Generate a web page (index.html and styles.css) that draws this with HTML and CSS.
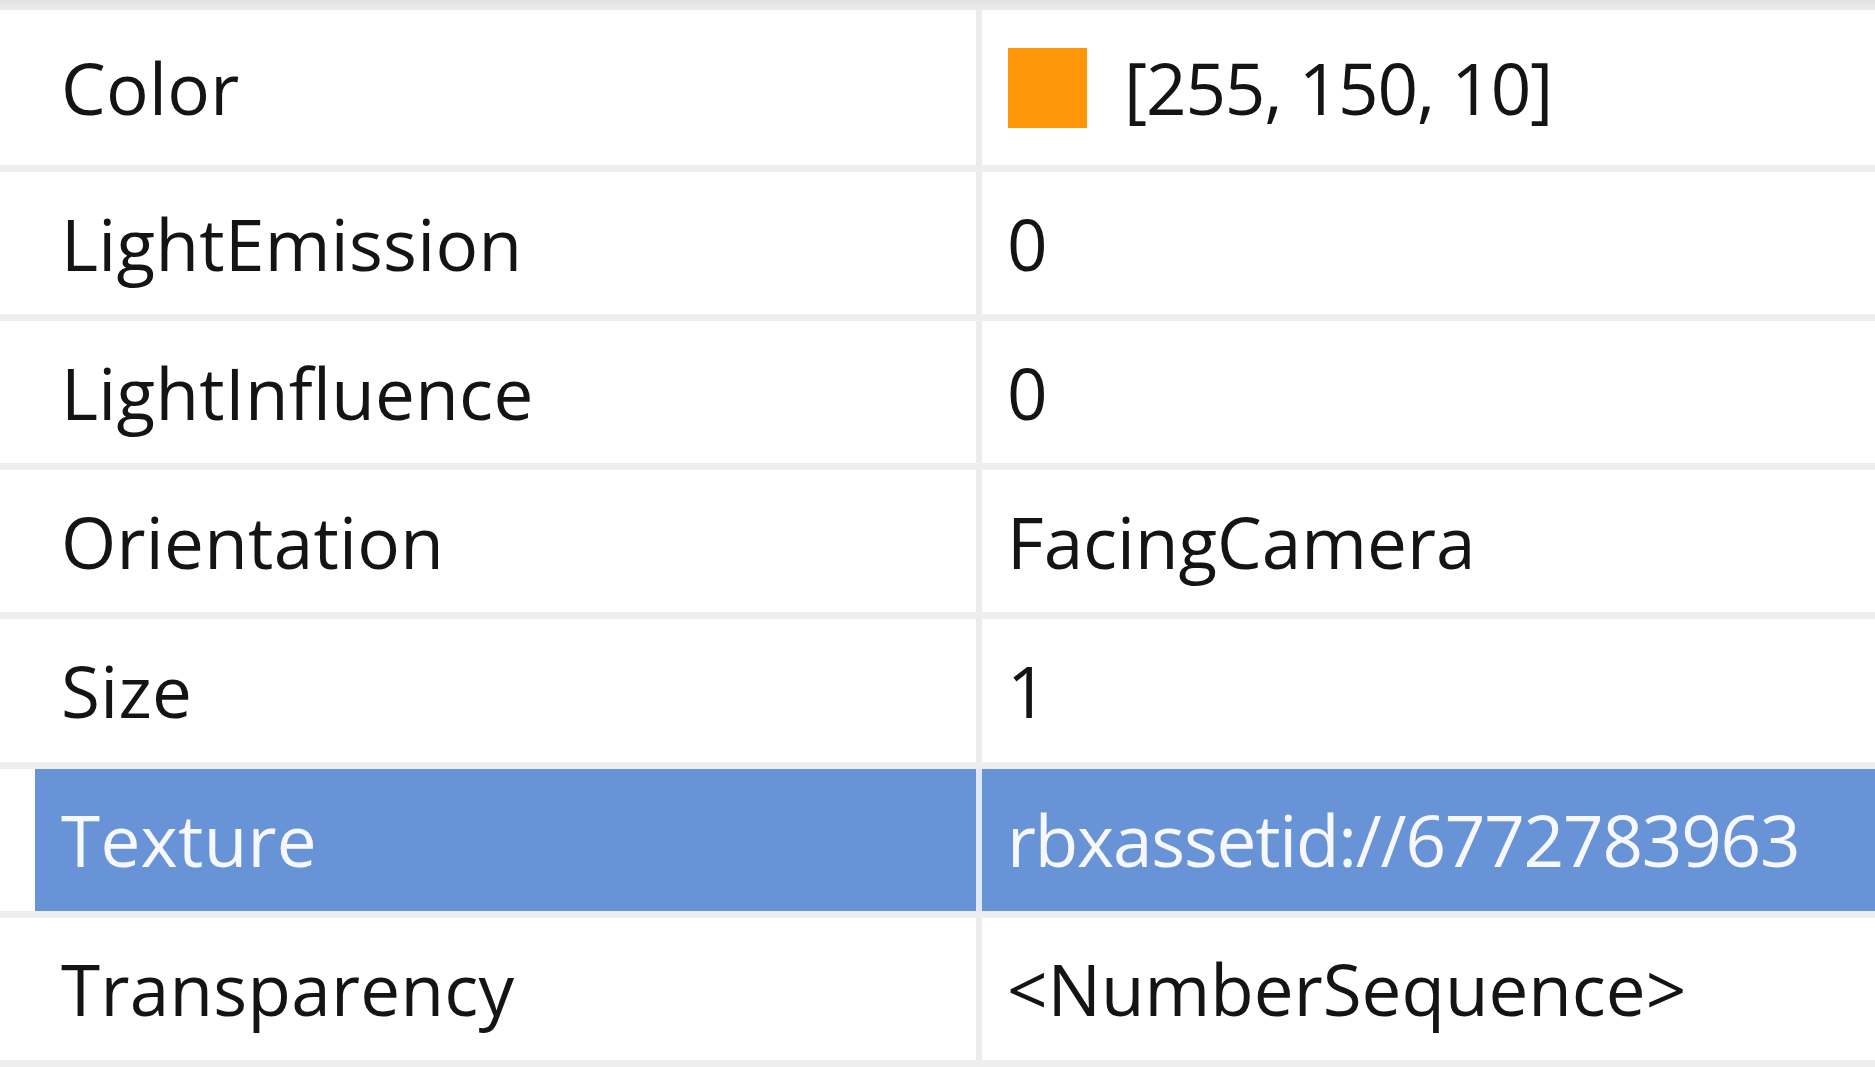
FILE: index.html
```html
<!DOCTYPE html>
<html lang="en">
<head>
<meta charset="utf-8">
<title>Properties</title>
<link rel="stylesheet" href="styles.css">
</head>
<body>
<div class="panel">
  <div class="topstrip"></div>
  <div class="row first">
    <div class="name">Color</div>
    <div class="divider"></div>
    <div class="value"><span class="swatch"></span><span class="tight">[255, 150, 10]</span></div>
  </div>
  <div class="row">
    <div class="name">LightEmission</div>
    <div class="divider"></div>
    <div class="value">0</div>
  </div>
  <div class="row">
    <div class="name">LightInfluence</div>
    <div class="divider"></div>
    <div class="value">0</div>
  </div>
  <div class="row">
    <div class="name">Orientation</div>
    <div class="divider"></div>
    <div class="value">FacingCamera</div>
  </div>
  <div class="row">
    <div class="name">Size</div>
    <div class="divider"></div>
    <div class="value">1</div>
  </div>
  <div class="row selected">
    <div class="name">Texture</div>
    <div class="divider"></div>
    <div class="value"><span class="tight">rbxassetid://6772783963</span></div>
  </div>
  <div class="row">
    <div class="name">Transparency</div>
    <div class="divider"></div>
    <div class="value">&lt;NumberSequence&gt;</div>
  </div>
</div>
</body>
</html>
```

FILE: styles.css
```css
html, body {
  margin: 0;
  padding: 0;
  background: #ffffff;
  overflow: hidden;
}

.panel {
  width: 1875px;
  height: 1067px;
  display: flex;
  flex-direction: column;
  font-family: "Open Sans", "Noto Sans", sans-serif;
  font-size: 71px;
  color: #141414;
}

.topstrip {
  height: 10px;
  background: linear-gradient(#e2e2e2, #ececec);
  flex: none;
}

.row {
  display: grid;
  grid-template-columns: 976px 6px 1fr;
  height: 149.17px;
  box-sizing: border-box;
  border-bottom: 7px solid #eeeeee;
  flex: none;
}

.row.first {
  height: 162px;
}

.name {
  display: flex;
  align-items: center;
  padding-left: 61px;
  white-space: nowrap;
  letter-spacing: 0.3px;
}

.divider {
  background: #ececec;
}

.value {
  display: flex;
  align-items: center;
  padding-left: 25px;
  white-space: nowrap;
}

.tight {
  letter-spacing: -1.2px;
}

.swatch {
  width: 79px;
  height: 80px;
  background: #ff960a;
  margin-left: 1px;
  margin-right: 37px;
  flex: none;
}

.row.selected .name {
  margin-left: 35px;
  padding-left: 26px;
  background: #6893d6;
  color: #f6f8fd;
}

.row.selected .divider {
  background: #e2e9f6;
}

.row.selected .value {
  background: #6893d6;
  color: #f6f8fd;
}
```
